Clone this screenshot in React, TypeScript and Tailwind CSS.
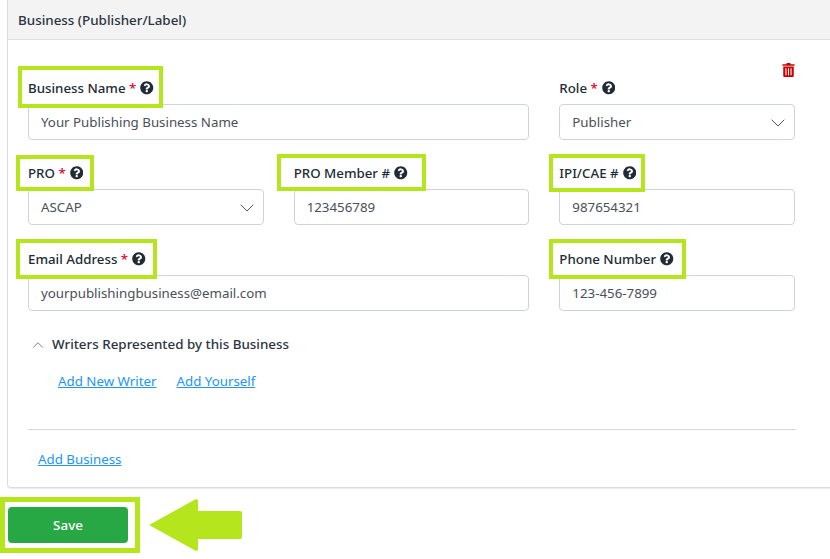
import React from 'react';
import { ChevronDown, ChevronUp } from 'lucide-react';

const HelpIcon = () => (
  <svg viewBox="0 0 512 512" className="w-[13.500px] h-[13.500px] fill-[#212b36] inline-block shrink-0">
    <path d="M504 256c0 137-111 248-248 248S8 393 8 256C8 119 119 8 256 8s248 111 248 248zM262.700 90c-54.500 0-89.300 23-116.600 63.800-3.500 5.300-2.400 12.400 2.700 16.300l34.700 26.300c5.200 3.900 12.600 3 16.700-2.100 17.900-22.700 30.100-35.800 57.300-35.800 20.400 0 45.700 13.100 45.700 33 0 15-12.400 22.700-32.600 34-23.600 13.200-54.800 29.700-54.800 70.900V308c0 6.600 5.400 12 12 12h56c6.600 0 12-5.400 12-12v-1.300c0-28.600 83.500-29.800 83.500-107.200 0-58.300-60.500-102.500-117.100-102.500zM256 339c-24.800 0-45 20.200-45 45s20.200 45 45 45 45-20.200 45-45-20.200-45-45-45z" />
  </svg>
);

const TrashIcon = () => (
  <svg viewBox="0 0 14 16" className="w-[13px] h-[14px] fill-[#c80000]">
    <path fillRule="evenodd" d="M5 0h4l.6 1.500H13.500a.5.500 0 0 1 .5.500v1H0V2a.5.500 0 0 1 .5-.500h3.900L5 0zM1 4h12v10.500c0 .8-.7 1.500-1.500 1.500h-9C1.700 16 1 15.300 1 14.500V4zm2.500 2v8h1.200V6H3.500zm2.900 0v8h1.200V6H6.400zm2.900 0v8h1.200V6H9.300z" />
  </svg>
);

// green highlight drawn over the label, offsets differ for each field
const Field = ({
  label,
  required,
  value,
  select,
  box,
  className,
}: {
  label: string;
  required?: boolean;
  value: string;
  select?: boolean;
  box?: string;
  className?: string;
}) => (
  <div className={className}>
    <div className="relative h-[21px] mb-[6px] pt-[1px] flex items-center gap-[4px] text-[13.300px] leading-[21px] font-medium text-[#212b36]">
      <span>
        {label}
        {required && <span className="text-[#e3002b]"> *</span>}
      </span>
      <HelpIcon />
      {box && <div className={`absolute border-[4px] border-[#b5e61d] ${box}`} />}
    </div>
    <div className="h-[36px] pt-[1px] flex items-center justify-between border border-[#ced4da] rounded-[4px] pl-[12px] pr-[4px] bg-white text-[13.300px] text-[#495057]">
      <span>{value}</span>
      {select && <ChevronDown size={24} strokeWidth={1} className="text-[#555]" />}
    </div>
  </div>
);

export default function App() {
  return (
    <div className="w-[830px] h-[559px] bg-white overflow-hidden font-['Noto_Sans',sans-serif]">
      {/* Card */}
      <div className="ml-[7px] w-[830px] h-[488px] border-l border-b border-[#dcdcdc] rounded-bl-[4px] shadow-[0_1px_1px_rgba(0,0,0,0.08)]">
        <div className="h-[40px] pt-[1px] bg-[#f3f3f3] border-b border-[#dedede] pl-[10px] flex items-center text-[13.400px] font-medium text-[#2b3440]">
          Business (Publisher/Label)
        </div>

        <div className="relative pl-[20px] pt-[37px]">
          <div className="absolute left-[774px] top-[23px]">
            <TrashIcon />
          </div>

          <div className="w-[767px] grid grid-cols-3 gap-x-[30px] gap-y-[22px]">
            <Field className="col-span-2" label="Business Name" required value="Your Publishing Business Name" box="left-[-10px] right-[366px] top-[-11px] bottom-[-10px]" />
            <Field label="Role" required value="Publisher" select />
            <Field label="PRO" required value="ASCAP" select box="left-[-12px] right-[170px] top-[-7px] bottom-[-8px]" />
            <Field label="PRO Member #" value="123456789" box="left-[-17px] right-[103px] top-[-8px] bottom-[-8px]" />
            <Field label="IPI/CAE #" value="987654321" box="left-[-10px] right-[150px] top-[-8px] bottom-[-9px]" />
            <Field className="col-span-2 mt-[1px]" label="Email Address" required value="yourpublishingbusiness@email.com" box="left-[-12px] right-[372px] top-[-9px] bottom-[-10px]" />
            <Field className="mt-[1px]" label="Phone Number" value="123-456-7899" box="left-[-10px] right-[109px] top-[-9px] bottom-[-10px]" />
          </div>

          <div className="mt-[23px] ml-[1px] flex items-center gap-[5px] h-[21px] text-[13.400px] font-medium text-[#2b3440]">
            <ChevronUp size={18} strokeWidth={1} className="text-[#555]" />
            <span>Writers Represented by this Business</span>
          </div>

          <div className="mt-[16px] ml-[30px] flex gap-[20px] text-[13.300px] leading-[21px] text-[#2196f3] underline">
            <span>Add New Writer</span>
            <span>Add Yourself</span>
          </div>

          <div className="mt-[37px] w-[768px] border-t border-[#d6d6d6]" />

          <div className="mt-[19px] ml-[10px] text-[13.300px] leading-[21px] text-[#2196f3] underline">Add Business</div>
        </div>
      </div>

      {/* Save row */}
      <div className="mt-[9px] flex items-center">
        <div className="w-[140px] h-[56px] border-[5px] border-[#b5e61d] flex items-center pl-[3px]">
          <button className="w-[120px] h-[36px] rounded-[4px] bg-[#28a745] text-white text-[13.400px] font-medium">Save</button>
        </div>
        <svg viewBox="0 0 93 52" className="ml-[9px] w-[93px] h-[52px] fill-[#b5e61d]">
          <path d="M0 26 L47 0 L49 1 L49 12 L91 12 Q93 12 93 14 L93 38 Q93 40 91 40 L49 40 L49 51 L47 52 Z" />
        </svg>
      </div>
    </div>
  );
}
